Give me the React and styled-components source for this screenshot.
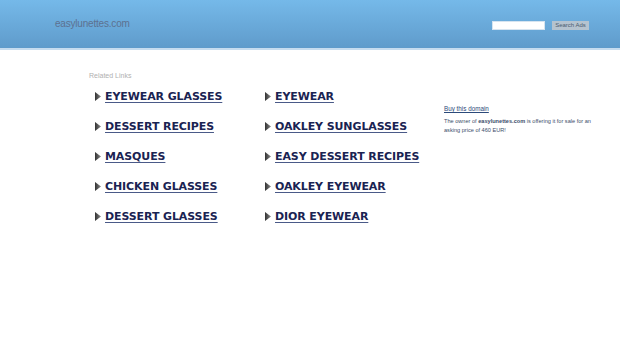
import React from 'react';
import styled, { createGlobalStyle } from 'styled-components';

const GlobalStyle = createGlobalStyle`
  body {
    margin: 0;
    background: #ffffff;
    font-family: 'Liberation Sans', Arial, sans-serif;
  }
`;

const links = [
  ['EYEWEAR GLASSES', 'EYEWEAR'],
  ['DESSERT RECIPES', 'OAKLEY SUNGLASSES'],
  ['MASQUES', 'EASY DESSERT RECIPES'],
  ['CHICKEN GLASSES', 'OAKLEY EYEWEAR'],
  ['DESSERT GLASSES', 'DIOR EYEWEAR'],
];

const Arrow = () => (
  <ArrowIcon viewBox="0 0 6 9" width="6" height="9">
    <defs>
      <linearGradient id="ag" x1="0" y1="0" x2="1" y2="0">
        <stop offset="0" stopColor="#333" />
        <stop offset="1" stopColor="#888" />
      </linearGradient>
    </defs>
    <path d="M0 0 L6 4.5 L0 9 Z" fill="url(#ag)" />
  </ArrowIcon>
);

const App = () => {
  return (
    <Page>
      <GlobalStyle />
      <Header>
        <Logo>easylunettes.com</Logo>
        <SearchForm>
          <SearchInput type="text" />
          <SearchButton type="button">Search Ads</SearchButton>
        </SearchForm>
      </Header>
      <Body>
        <LinksArea>
          <RelatedTitle>Related Links</RelatedTitle>
          <LinkGrid>
            {links.map(([a, b]) => (
              <React.Fragment key={a}>
                <LinkItem><Arrow /><LinkText href="#">{a}</LinkText></LinkItem>
                <LinkItem><Arrow /><LinkText href="#">{b}</LinkText></LinkItem>
              </React.Fragment>
            ))}
          </LinkGrid>
        </LinksArea>
        <Sidebar>
          <BuyLink href="#">Buy this domain</BuyLink>
          <SaleText>
            The owner of <Domain>easylunettes.com</Domain> is offering it for sale for an asking price of 460 EUR!
          </SaleText>
        </Sidebar>
      </Body>
    </Page>
  );
};

export default App;

// Styled Components

const Page = styled.div`
  width: 620px;
  min-height: 343px;
  background: #fff;
`;

const Header = styled.header`
  height: 48px;
  background: linear-gradient(#75b9e9, #5f9bcb);
  border-bottom: 2px solid #c6dcef;
  display: flex;
  align-items: flex-start;
  justify-content: space-between;
`;

const Logo = styled.div`
  margin: 18px 0 0 55px;
  font-size: 10px;
  color: #5d7190;
  letter-spacing: -0.2px;
`;

const SearchForm = styled.div`
  display: flex;
  gap: 7px;
  margin: 21px 31px 0 0;
`;

const SearchInput = styled.input`
  box-sizing: border-box;
  width: 53px;
  height: 9px;
  padding: 0;
  border: 1px solid #d6e4f0;
  background: #fff;
  outline: none;
`;

const SearchButton = styled.button`
  width: 37px;
  height: 9px;
  padding: 0;
  border: none;
  background: #b5c3cf;
  color: #4c5c70;
  font-family: 'Liberation Sans', Arial, sans-serif;
  font-size: 6px;
  line-height: 9px;
`;

const Body = styled.main`
  display: flex;
  padding: 22px 0 0 89px;
`;

const LinksArea = styled.section`
  width: 355px;
`;

const RelatedTitle = styled.div`
  font-size: 7px;
  color: #b0b0b0;
  margin-bottom: 10px;
`;

const LinkGrid = styled.div`
  display: grid;
  grid-template-columns: 170px 185px;
  grid-auto-rows: 30px;
  padding-left: 6px;
`;

const LinkItem = styled.div`
  display: flex;
  align-items: center;
  gap: 4px;
  height: 14px;
`;

const ArrowIcon = styled.svg`
  flex: none;
`;

const LinkText = styled.a`
  font-family: 'DejaVu Sans', Verdana, sans-serif;
  font-weight: bold;
  font-size: 11px;
  color: #1a2352;
  text-decoration: underline;
  text-decoration-color: #4a5a88;
  text-underline-offset: 2px;
  white-space: nowrap;
  letter-spacing: -0.1px;
`;

const Sidebar = styled.aside`
  width: 150px;
  padding-top: 33px;
`;

const BuyLink = styled.a`
  display: block;
  font-size: 6.3px;
  color: #2c4a7a;
  text-decoration: underline;
  margin-bottom: 5px;
`;

const SaleText = styled.p`
  margin: 0;
  font-size: 5.6px;
  line-height: 9px;
  color: #3b4d6a;
`;

const Domain = styled.span`
  font-weight: bold;
`;
